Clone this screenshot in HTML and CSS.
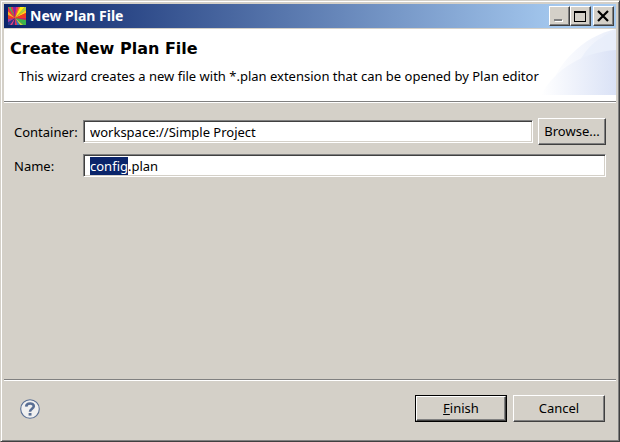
FILE: index.html
```html
<!DOCTYPE html>
<html lang="en">
<head>
<meta charset="utf-8">
<title>New Plan File</title>
<link rel="stylesheet" href="styles.css">
</head>
<body>
<form class="dialog">
  <header class="titlebar">
    <svg class="app-icon" viewBox="0 0 18 18" aria-hidden="true">
      <path fill="#e8202a" d="M0 0h18v18H0z"/>
      <path fill="#4fae5c" d="M0 0h3l4 11z"/>
      <path fill="#e03a4c" d="M3 0h2l2 11z"/>
      <path fill="#7a2aa8" d="M5 0h3L7 11z"/>
      <path fill="#e0288c" d="M8 0h2L7 11z"/>
      <path fill="#f8742c" d="M10 0h2L7 11z"/>
      <path fill="#ffee10" d="M12 0h5L7 11z"/>
      <path fill="#a8d83c" d="M17 0h1v3L7 11z"/>
      <path fill="#ffd21a" d="M18 3v3L7 11z"/>
      <path fill="#f03c24" d="M18 6v5H7z"/>
      <path fill="#c8206c" d="M18 11v2L7 11z"/>
      <path fill="#3cb44c" d="M18 13v5h-3L7 11z"/>
      <path fill="#b8e040" d="M15 18h-3L7 11z"/>
      <path fill="#2c7cc0" d="M12 18H9l-2-7z"/>
      <path fill="#e83060" d="M9 18H7v-7z"/>
      <path fill="#38307c" d="M7 18H4l3-7z"/>
      <path fill="#d84c94" d="M4 18H2l5-7z"/>
      <path fill="#28388c" d="M2 18H0v-3l7-4z"/>
      <path fill="#9c3cac" d="M0 15v-3l7-1z"/>
      <path fill="#e83c2c" d="M0 12V8l7 3z"/>
      <path fill="#ffb020" d="M0 8V4l7 7z"/>
      <path fill="#e8304c" d="M0 4V0l7 11z"/>
    </svg>
    <span class="titlebar-text">New Plan File</span>
    <div class="window-controls">
      <button type="button" class="raised control" aria-label="Minimize">
        <svg viewBox="0 0 16 16" shape-rendering="crispEdges"><path fill="#fff" d="M4 13h8v1H4zM11 12h1v1h-1z"/><path fill="#808080" d="M3 11h8v2H3z"/></svg>
      </button>
      <button type="button" class="raised control" aria-label="Maximize">
        <svg viewBox="0 0 16 16" shape-rendering="crispEdges"><path fill="#000" fill-rule="evenodd" d="M2 3h12v11H2zM3 5v8h10V5z"/></svg>
      </button>
      <button type="button" class="raised control close" aria-label="Close">
        <svg viewBox="0 0 16 16"><path fill="none" stroke="#000" stroke-width="2.2" d="M3 3l10 10M13 3L3 13"/></svg>
      </button>
    </div>
  </header>

  <section class="banner">
    <div class="banner-copy">
      <h1>Create New Plan File</h1>
      <p>This wizard creates a new file with *.plan extension that can be opened by Plan editor</p>
    </div>
    <svg class="banner-art" viewBox="0 0 75 66" aria-hidden="true">
      <defs>
        <linearGradient id="outer"><stop offset="0" stop-color="#fff"/><stop offset="1" stop-color="#e9eefa"/></linearGradient>
        <linearGradient id="inner"><stop offset="0" stop-color="#fff"/><stop offset="1" stop-color="#dae2f6"/></linearGradient>
      </defs>
      <path fill="url(#outer)" d="M6 66C16 35 40 8 75 0V66z"/>
      <path fill="#e6ecfa" opacity=".6" d="M38 33Q50 10 75 2V66H30z"/>
      <path fill="url(#inner)" d="M0 66C14 40 42 23 75 21V66z"/>
    </svg>
  </section>

  <main class="fields">
    <div class="row">
      <label for="container">Container:</label>
      <input id="container" type="text" value="workspace://Simple Project">
      <button type="button" class="raised push browse">Browse...</button>
    </div>
    <div class="row">
      <label for="name">Name:</label>
      <input id="name" type="text" value="config.plan">
    </div>
  </main>

  <footer class="actions">
    <button type="button" class="help" aria-label="Help">
      <svg viewBox="0 0 20 20"><circle cx="10" cy="10" r="9.3" fill="#f0f0f0" stroke="#586e94" stroke-width="1.1"/><path fill="none" stroke="#586e94" stroke-width="2.6" d="M6.2 7.6C6.3 3.7 13.9 3.5 13.8 7.3C13.7 9.8 10 9.7 10 12.8"/><path fill="#586e94" d="M8.6 14h2.9v2.6H8.6z"/></svg>
    </button>
    <button type="submit" class="default"><span class="raised push"><u>F</u>inish</span></button>
    <button type="button" class="raised push cancel">Cancel</button>
  </footer>
</form>
<script src="script.js"></script>
</body>
</html>
```
FILE: script.js
```js
// Preselect the base name so typing replaces it but keeps the extension.
const nameField = document.getElementById("name");
nameField.focus();
nameField.setSelectionRange(0, nameField.value.lastIndexOf("."));
```
FILE: styles.css
```css
* {
  box-sizing: border-box;
}

body {
  margin: 0;
  background: #d4d0c8;
  color: #000;
  font: 13px/18px "Noto Sans", "Open Sans", sans-serif;
}

button,
input {
  font: inherit;
  color: inherit;
}

.dialog {
  display: flex;
  flex-direction: column;
  min-height: 100vh;
  padding: 2px;
  border: 1px solid;
  border-color: #d4d0c8 #404040 #404040 #d4d0c8;
  box-shadow: inset 1px 1px #fff, inset -1px -1px #808080;
}

.titlebar {
  display: flex;
  align-items: center;
  height: 26px;
  padding: 0 2px 0 4px;
  border: 1px solid #d4d0c8;
  background: linear-gradient(90deg, #0a246a, #a6caf0 92%);
}

.app-icon {
  width: 18px;
  height: 18px;
}

.titlebar-text {
  margin-left: 4px;
  color: #fff;
  font-size: 14px;
  font-weight: bold;
}

.window-controls {
  display: flex;
  margin-left: auto;
}

.raised {
  border: 1px solid;
  border-color: #fff #404040 #404040 #fff;
  border-radius: 0;
  background: #d4d0c8;
  box-shadow: inset -1px -1px #808080;
}

.control {
  width: 21px;
  height: 20px;
  padding: 0;
}

.control svg {
  display: block;
  width: 16px;
  height: 16px;
  margin: 0 1px;
}

.close {
  margin-left: 2px;
}

.banner {
  display: flex;
  justify-content: space-between;
  height: 74px;
  margin: 0 1px;
  border-bottom: 1px solid #fff;
  background: #fff;
  box-shadow: inset 0 -1px #808080;
}

.banner-copy {
  min-width: 0;
  padding: 10px 0 0 6px;
}

h1 {
  margin: 0;
  font: bold 16px/20px "DejaVu Sans", sans-serif;
}

p {
  margin: 8px 0 0 9px;
}

.banner-art {
  flex: none;
  width: 75px;
  height: 66px;
}

.fields {
  display: grid;
  gap: 9px;
  padding: 15px 11px;
}

.row {
  display: flex;
  align-items: center;
}

.row label {
  flex: none;
  width: 69px;
}

.row input {
  flex: 1;
  min-width: 0;
  height: 23px;
  padding: 0 6px;
  border: 1px solid;
  border-color: #808080 #fff #fff #808080;
  border-radius: 0;
  outline: 0;
  background: #fff;
  box-shadow: inset 1px 1px #404040, inset -1px -1px #d4d0c8;
}

input::selection {
  background: #0a246a;
  color: #fff;
}

.push {
  height: 27px;
  padding: 0 0 2px;
}

.browse {
  width: 68px;
  margin-left: 5px;
}

.actions {
  display: flex;
  align-items: center;
  height: 60px;
  margin: auto 1px 0;
  padding: 0 11px 2px 16px;
  border-top: 1px solid #808080;
  box-shadow: inset 0 1px #fff;
}

.help {
  width: 20px;
  height: 20px;
  margin-right: auto;
  padding: 0;
  border: 0;
  background: none;
}

.help svg {
  display: block;
}

.default {
  display: flex;
  width: 92px;
  height: 27px;
  padding: 0;
  border: 1px solid #000;
  border-radius: 0;
  background: #d4d0c8;
}

.default .push {
  flex: 1;
  height: 25px;
  padding: 2px 0;
}

.cancel {
  width: 92px;
  margin-left: 6px;
}
```
